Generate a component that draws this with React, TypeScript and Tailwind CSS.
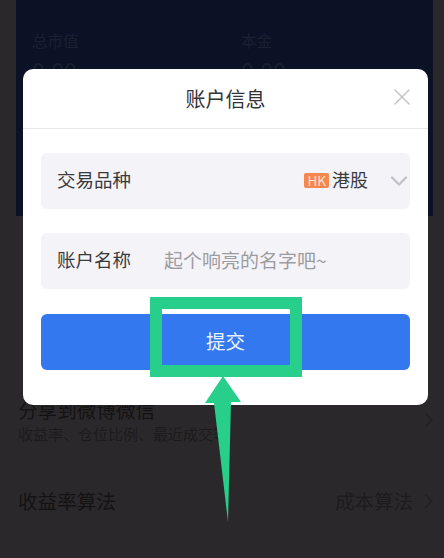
import { ChevronDown, ChevronRight, X } from "lucide-react";

const FONT = "font-['Noto_Sans_CJK_SC','Liberation_Sans',sans-serif]";

function Stat({ label }: { label: string }) {
  return (
    <div className="w-[209px] shrink-0">
      <p className="text-[15.5px] leading-[22px] text-[#1a2030]">{label}</p>
      <p className="mt-[5px] text-[23px] leading-[28px] text-[#1a2030]">0.00</p>
    </div>
  );
}

function Row({ label, children }: { label: string; children: React.ReactNode }) {
  return (
    <div className="flex h-14 items-center rounded-md bg-[#f4f3f8] pl-4">
      <span className="mb-1 text-[18.5px] leading-none text-[#3a3a3c]">{label}</span>
      {children}
    </div>
  );
}

export default function App() {
  return (
    <div className={`relative h-[558px] w-[444px] overflow-hidden bg-[#2a282a] ${FONT}`}>
      {/* page behind the dialog */}
      <div className="mx-4 h-[216px] w-[417px] bg-[#0c1226] px-4 pt-[29px]">
        <div className="flex">
          <Stat label="总市值" />
          <Stat label="本金" />
        </div>
      </div>
      <div className="pr-[3px] pl-[18px] pt-[180px]">
        <div className="flex items-center justify-between">
          <div>
            <p className="text-[19.6px] leading-7 text-[#141314]">分享到微博微信</p>
            <p className="text-[15px] leading-[19px] text-[#1d1c1d]">收益率、仓位比例、最近成交等</p>
          </div>
          <ChevronRight className="h-6 w-6 text-[#201f20]" strokeWidth={1.25} />
        </div>
        <div className="mt-[44px] flex items-center justify-between">
          <p className="text-[19.6px] leading-7 text-[#141314]">收益率算法</p>
          <div className="flex items-center">
            <span className="text-[19.5px] leading-7 text-[#1d1c1d]">成本算法</span>
            <ChevronRight className="ml-[4px] h-6 w-6 text-[#201f20]" strokeWidth={1.25} />
          </div>
        </div>
      </div>

      {/* dialog */}
      <div className="absolute top-[69px] left-[23px] w-[405px] rounded-[10px] bg-white">
        <div className="relative flex h-[60px] items-center justify-center border-b border-[#e8e8ea]">
          <span className="text-[20px] leading-none text-[#333336]">账户信息</span>
          <X className="absolute top-[14px] right-[12px] h-7 w-7 text-[#c4c4c6]" strokeWidth={1.25} />
        </div>
        <div className="flex flex-col px-[18px] pt-6 pb-[35px]">
          <Row label="交易品种">
            <div className="ml-auto flex items-center">
              <span className="mb-[1px] rounded-[2px] bg-[#f5874f] px-[3px] text-[13.5px] leading-[15px] text-[#fde3d4]">HK</span>
              <span className="mb-1 ml-[3px] text-[18px] leading-none text-[#3a3a3c]">港股</span>
              <ChevronDown className="mr-[-3px] ml-[17px] h-7 w-7 text-[#c2c2c8]" strokeWidth={2} />
            </div>
          </Row>
          <div className="mt-6">
            <Row label="账户名称">
              <span className="mb-[3px] ml-[33px] text-[19px] leading-none text-[#9c9ca0]">起个响亮的名字吧~</span>
            </Row>
          </div>
          <div className="mt-[25px] flex h-14 items-center justify-center rounded-md bg-[#3478f0] pb-[2px] text-[19.5px] text-[#e8f0ff]">提交</div>
        </div>
      </div>

      {/* annotation */}
      <div className="absolute top-[297px] left-[150px] h-[80px] w-[152px] border-[12px] border-[#27cf8a]" />
      <svg className="absolute top-[376px] left-[200px]" width="50" height="150" viewBox="0 0 50 150">
        <path d="M23 0 L41 26 L31 26 L28 146 L14 27 L5 27 Z" fill="#27cf8a" />
      </svg>
    </div>
  );
}
